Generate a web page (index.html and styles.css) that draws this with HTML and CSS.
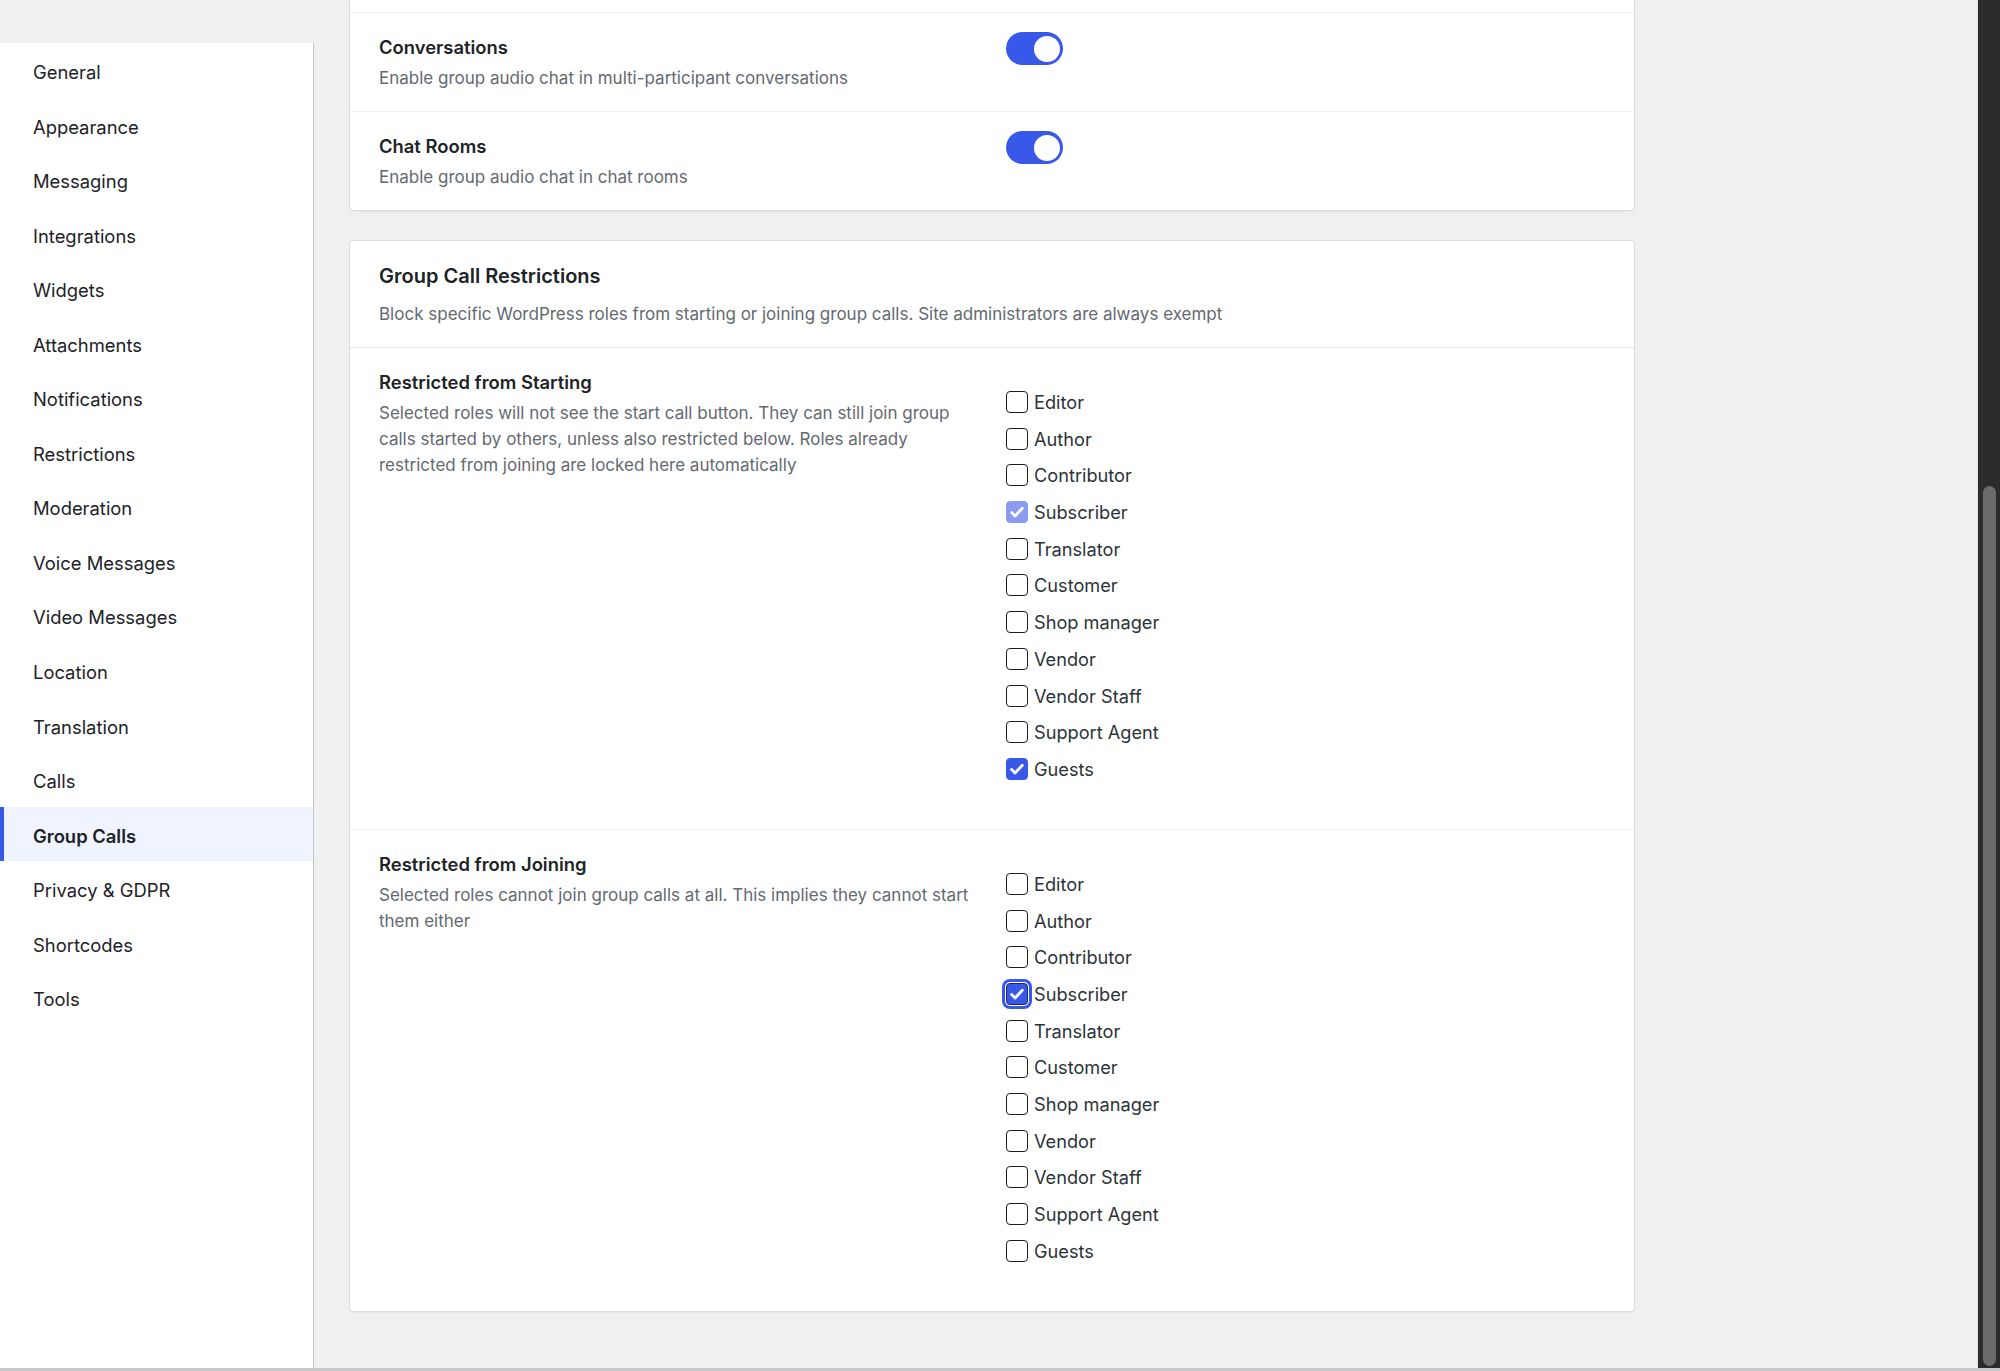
FILE: index.html
```html
<!DOCTYPE html>
<html lang="en">
<head>
	<meta charset="UTF-8">
	<title>Group Calls</title>
	<link rel="stylesheet" href="styles.css">
</head>
<body>
	<div class="page">
		<!-- settings menu -->
		<ul class="sidebar">
			<li class="nav-item">General</li>
			<li class="nav-item">Appearance</li>
			<li class="nav-item">Messaging</li>
			<li class="nav-item">Integrations</li>
			<li class="nav-item">Widgets</li>
			<li class="nav-item">Attachments</li>
			<li class="nav-item">Notifications</li>
			<li class="nav-item">Restrictions</li>
			<li class="nav-item">Moderation</li>
			<li class="nav-item">Voice Messages</li>
			<li class="nav-item">Video Messages</li>
			<li class="nav-item">Location</li>
			<li class="nav-item">Translation</li>
			<li class="nav-item">Calls</li>
			<li class="nav-item active">Group Calls</li>
			<li class="nav-item">Privacy &amp; GDPR</li>
			<li class="nav-item">Shortcodes</li>
			<li class="nav-item">Tools</li>
		</ul>

		<div class="main">
			<!-- audio chat card (scrolled, top cut off) -->
			<div class="card card-cut">
				<div class="row-cut"></div>
				<div class="row">
					<div>
						<p class="row-title">Conversations</p>
						<p class="row-desc">Enable group audio chat in multi-participant conversations</p>
					</div>
					<div class="control">
						<span class="toggle on"><span class="knob"></span></span>
					</div>
				</div>
				<div class="row">
					<div>
						<p class="row-title">Chat Rooms</p>
						<p class="row-desc">Enable group audio chat in chat rooms</p>
					</div>
					<div class="control">
						<span class="toggle on"><span class="knob"></span></span>
					</div>
				</div>
			</div>

			<!-- restrictions card -->
			<div class="card">
				<div class="card-head">
					<p class="card-title">Group Call Restrictions</p>
					<p class="row-desc head-desc">Block specific WordPress roles from starting or joining group calls. Site administrators are always exempt</p>
				</div>

				<div class="row section">
					<div>
						<p class="row-title">Restricted from Starting</p>
						<p class="row-desc">Selected roles will not see the start call button. They can still join group calls started by others, unless also restricted below. Roles already restricted from joining are locked here automatically</p>
					</div>
					<ul class="roles">
						<li class="role"><span class="cb"></span>Editor</li>
						<li class="role"><span class="cb"></span>Author</li>
						<li class="role"><span class="cb"></span>Contributor</li>
						<li class="role"><span class="cb checked locked"><svg viewBox="0 0 20 20"><path d="M4.6 10.4l3.5 3.6 7.2-7.8"/></svg></span>Subscriber</li>
						<li class="role"><span class="cb"></span>Translator</li>
						<li class="role"><span class="cb"></span>Customer</li>
						<li class="role"><span class="cb"></span>Shop manager</li>
						<li class="role"><span class="cb"></span>Vendor</li>
						<li class="role"><span class="cb"></span>Vendor Staff</li>
						<li class="role"><span class="cb"></span>Support Agent</li>
						<li class="role"><span class="cb checked"><svg viewBox="0 0 20 20"><path d="M4.6 10.4l3.5 3.6 7.2-7.8"/></svg></span>Guests</li>
					</ul>
				</div>

				<div class="row section">
					<div>
						<p class="row-title">Restricted from Joining</p>
						<p class="row-desc">Selected roles cannot join group calls at all. This implies they cannot start them either</p>
					</div>
					<ul class="roles">
						<li class="role"><span class="cb"></span>Editor</li>
						<li class="role"><span class="cb"></span>Author</li>
						<li class="role"><span class="cb"></span>Contributor</li>
						<li class="role"><span class="cb checked focus"><svg viewBox="0 0 20 20"><path d="M4.6 10.4l3.5 3.6 7.2-7.8"/></svg></span>Subscriber</li>
						<li class="role"><span class="cb"></span>Translator</li>
						<li class="role"><span class="cb"></span>Customer</li>
						<li class="role"><span class="cb"></span>Shop manager</li>
						<li class="role"><span class="cb"></span>Vendor</li>
						<li class="role"><span class="cb"></span>Vendor Staff</li>
						<li class="role"><span class="cb"></span>Support Agent</li>
						<li class="role"><span class="cb"></span>Guests</li>
					</ul>
				</div>
			</div>
		</div>

		<div class="scrollbar"><div class="thumb"></div></div>
	</div>
</body>
</html>
```

FILE: styles.css
```css
*{
	box-sizing:border-box;
}
html,body{
	margin:0;
	padding:0;
}
body{
	background:#f0f0f1;
	font-family:Inter,"Noto Sans",sans-serif;
	color:#1d2327;
	overflow:hidden;
}
p{
	margin:0;
}
ul{
	margin:0;
	padding:0;
	list-style:none;
}
.page{
	display:flex;
	height:1371px;
	border-bottom:3px solid #c9c9cb;
}

/* sidebar */
.sidebar{
	width:314px;
	flex-shrink:0;
	margin-top:43px;
	background:#fff;
	border-right:1px solid #c3c4c7;
}
.nav-item{
	height:54.55px;
	line-height:54.55px;
	padding:2px 0 0 33px;
	font-size:18.4px;
	color:#1d2327;
}
.nav-item.active{
	background:#f0f4fe;
	box-shadow:inset 4px 0 0 #3858e9;
	font-weight:600;
}

/* main column */
.main{
	flex:1;
	padding-left:35px;
}
.card{
	width:1286px;
	background:#fff;
	border:1px solid #dcdcde;
	border-radius:4px;
	margin-bottom:29px;
	box-shadow:0 1px 1px rgba(0,0,0,0.04);
}
.card-cut{
	border-top:none;
	border-radius:0 0 4px 4px;
}
.row-cut{
	height:13px;
	border-bottom:1px solid #f0f0f1;
}
.row{
	display:grid;
	grid-template-columns:606px 1fr;
	column-gap:21px;
	padding:20px 29px;
	border-bottom:1px solid #f0f0f1;
}
.row:last-child{
	border-bottom:none;
}
.row-title{
	font-size:18.4px;
	font-weight:600;
	line-height:28px;
	color:#1d2327;
}
.row-desc{
	margin-top:4px;
	font-size:17px;
	line-height:26px;
	color:#646970;
}
.control{
	margin-top:-1px;
}
.toggle{
	display:inline-flex;
	justify-content:flex-end;
	align-items:center;
	width:57px;
	height:33px;
	padding:0 3px;
	border-radius:17px;
	background:#3858e9;
}
.knob{
	width:26px;
	height:26px;
	border-radius:50%;
	background:#fff;
}

.card-head{
	padding:21px 29px 20px;
	border-bottom:1px solid #e3e3e5;
}
.card-title{
	font-size:20px;
	font-weight:600;
	line-height:28px;
}
.head-desc{
	margin-top:11px;
}

.section{
	padding:20px 29px 46px;
}
.roles{
	display:flex;
	flex-direction:column;
	gap:8.7px;
	padding-top:20px;
}
.role{
	display:flex;
	align-items:center;
	height:28px;
	font-size:18.2px;
	color:#2c3338;
}
.cb{
	display:inline-flex;
	align-items:center;
	justify-content:center;
	width:22px;
	height:22px;
	margin-right:6px;
	border:1.5px solid #1e1e1e;
	border-radius:4px;
	background:#fff;
}
.cb svg{
	width:20px;
	height:20px;
	fill:none;
	stroke:#fff;
	stroke-width:2.8;
	stroke-linecap:round;
	stroke-linejoin:round;
}
.cb.checked{
	background:#3858e9;
	border-color:#3858e9;
}
.cb.locked{
	background:#8a9cf1;
	border-color:#8a9cf1;
}
.cb.focus{
	border-color:#1e2a5e;
	box-shadow:0 0 0 1px #fff,0 0 0 4px #3858e9;
}

/* fake window scrollbar */
.scrollbar{
	width:23px;
	flex-shrink:0;
	background:#2c2c2c;
	border-left:1px solid #e4e4e4;
	padding:486px 4px 2px 5px;
}
.thumb{
	height:100%;
	border-radius:7px;
	background:#6b6b6b;
}
```
